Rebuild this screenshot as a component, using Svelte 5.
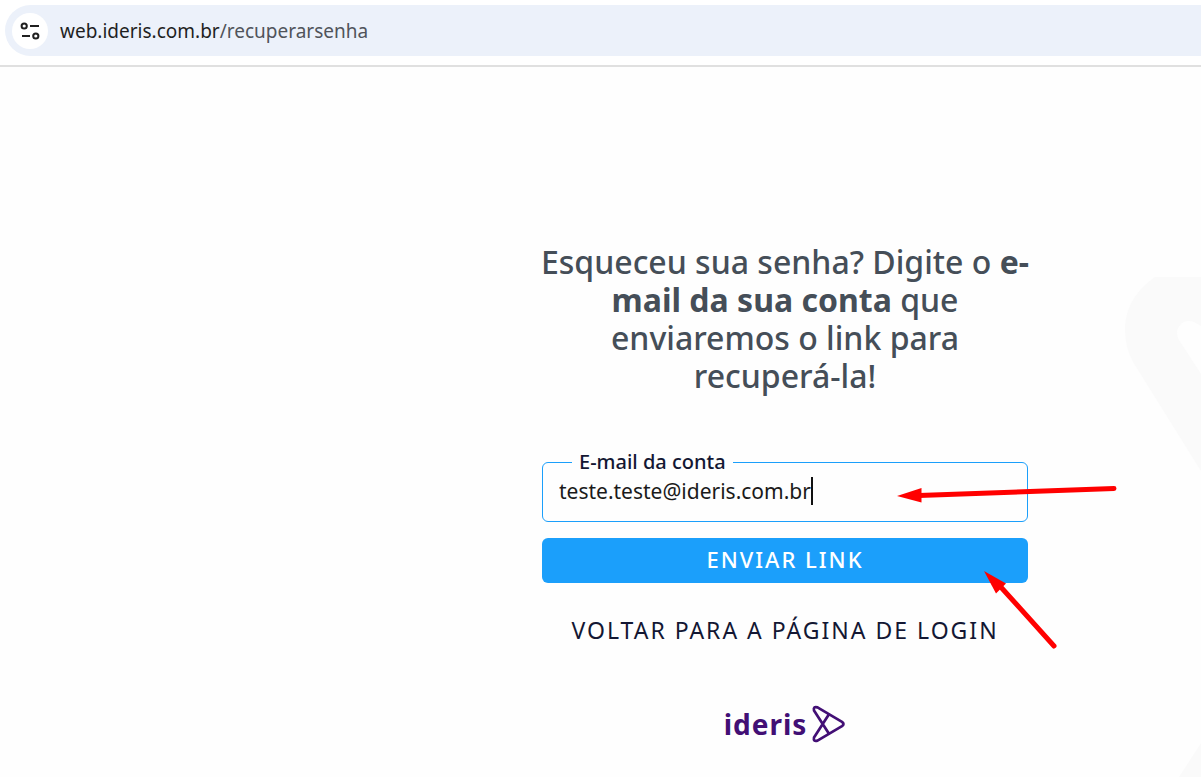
<script lang="ts">
	let email = $state('teste.teste@ideris.com.br');

	function submit(event: SubmitEvent) {
		event.preventDefault();
	}
</script>

<div class="screen">
	<header class="toolbar">
		<div class="address">
			<button class="site-info" type="button" aria-label="Informações do site">
				<svg viewBox="0 0 20 20" width="20" height="20" fill="none" stroke="#1f1f1f" stroke-width="2">
					<circle cx="4.2" cy="5" r="2.6" />
					<path d="M10 5h9M2 15h8" />
					<circle cx="15.8" cy="15" r="2.6" />
				</svg>
			</button>
			<span class="url">web.ideris.com.br<span class="path">/recuperarsenha</span></span>
		</div>
	</header>

	<main>
		<svg class="watermark" viewBox="0 0 76 500" width="76" height="500" aria-hidden="true">
			<path fill="#fafafa" fill-rule="evenodd" d="M76 0H30C10 14 0 32 0 53Q0 70 8 85L76 194ZM76 49L69 45C59 41 52 49 52 56Q52 60 54 63L76 97Z" />
			<path fill="#fafafa" d="M76 466L54 500H76Z" />
		</svg>

		<form class="recover" onsubmit={submit}>
			<h1>Esqueceu sua senha? Digite o <strong>e-mail da sua conta</strong> que enviaremos o link para recuperá-la!</h1>

			<fieldset>
				<legend><label for="email">E-mail da conta</label></legend>
				<div class="entry">
					<input id="email" type="text" inputmode="email" autocomplete="off" spellcheck="false" bind:value={email} />
					<span class="caret"></span>
				</div>
			</fieldset>

			<button class="send" type="submit">ENVIAR LINK</button>
			<a class="back" href="/login">VOLTAR PARA A PÁGINA DE LOGIN</a>

			<div class="brand">
				<span>ideris</span>
				<svg viewBox="0 0 34 38" width="34" height="38" fill="none" stroke="#420f75" stroke-width="2.7" stroke-linejoin="round" stroke-linecap="round">
					<path d="M5.5 2.4L30 16.8Q33 19 30 21.200L5.500 35.600Q1 37 2 32.500L16.500 10M5.500 2.400Q1 1 2 5.500L16.500 28" />
				</svg>
			</div>

			<svg class="arrows" viewBox="0 0 220 170" width="220" height="170" fill="#f00" stroke="#f00" aria-hidden="true">
				<path d="M22 10.500L217 3.500" stroke-width="5" stroke-linecap="round" />
				<path d="M0 11L24.500 3V17.500Z" stroke="none" />
				<path d="M102 100L157 161" stroke-width="5" stroke-linecap="round" />
				<path d="M87 86L109 98.500L99 108.500Z" stroke="none" />
			</svg>
		</form>
	</main>
</div>

<style>
	:global(body) { margin: 0; background: #fff; }
	.screen {
		display: flex; flex-direction: column; min-height: 100vh; overflow: hidden;
		font-family: "Noto Sans", "Open Sans", sans-serif;
	}
	.toolbar { padding: 5px 0 9px 5px; border-bottom: 2px solid #e0e0e0; }
	.address {
		display: flex; align-items: center; gap: 12px; height: 51px; padding-left: 7px;
		background: #ecf1fa; border-radius: 26px 0 0 26px;
	}
	.site-info {
		display: grid; place-items: center; width: 36px; height: 36px; padding: 0;
		border: 0; border-radius: 50%; background: #fff;
	}
	.url { font-size: 19px; line-height: 28px; color: #1f1f1f; }
	.path { color: #50545a; }

	main { position: relative; flex: 1; padding: 176px 0 32px 369px; background: #fefefe; }
	.watermark { position: absolute; top: 210px; right: 0; }
	.recover {
		position: relative; display: flex; flex-direction: column; align-items: stretch;
		max-width: 486px; margin: 0 auto;
	}
	h1 {
		margin: 0 -4px 53px; font-size: 32px; line-height: 38px; font-weight: 500;
		color: #454e58; text-align: center;
	}
	strong { font-weight: 700; }
	fieldset {
		min-width: 0; margin: 0 0 16px; padding: 0 16px 16px;
		border: 1px solid #1b9ffb; border-radius: 6px;
	}
	legend {
		margin-left: 13px; padding: 0 7px; font-size: 20px; line-height: 28px; font-weight: 500; color: #131733;
	}
	.entry { display: flex; align-items: center; height: 29px; }
	input {
		field-sizing: content; min-width: 0; padding: 0; border: 0; outline: 0; background: none;
		font: 400 21px/28px "Noto Sans", "Open Sans", sans-serif; color: #1a1a1a;
	}
	.caret { width: 2px; height: 28px; background: #111; }
	.send {
		height: 45px; padding: 0 0 4px; border: 0; border-radius: 6px; background: #1b9ffb; color: #fff;
		font: 500 22px/32px "Noto Sans", "Open Sans", sans-serif; letter-spacing: 2px;
	}
	.back {
		align-self: center; margin-top: 31px; font-size: 23px; line-height: 32px;
		letter-spacing: 2px; color: #131733; text-decoration: none; white-space: nowrap;
	}
	.brand {
		display: flex; align-items: center; justify-content: center; gap: 5px; margin-top: 59px;
		font-size: 28px; line-height: 38px; font-weight: 700; letter-spacing: 1px; color: #420f75;
	}
	.arrows { position: absolute; top: 242px; left: 355px; pointer-events: none; }
</style>
